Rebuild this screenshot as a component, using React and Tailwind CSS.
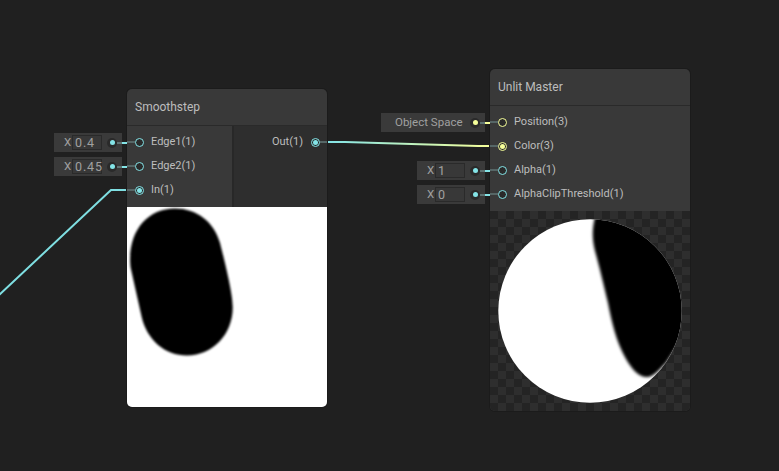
import React from "react";

const CYAN = "#84e4e7";
const YELLOW = "#f6ff9a";

function Port({ color, connected }) {
  return (
    <span
      className="relative ml-2 mr-[7px] flex h-[9px] w-[9px] shrink-0 items-center justify-center rounded-full border-[1.5px] bg-[#2a2a2a]"
      style={{ borderColor: color }}
    >
      {connected && <span className="h-[5px] w-[5px] rounded-full" style={{ background: color }} />}
    </span>
  );
}

function Field({ axis, value, color, text, className }) {
  return (
    <div className={`absolute right-[calc(100%+5px)] top-[3px] flex h-[19px] items-center bg-[#3a3a3a] text-[11.5px] text-[#a0a0a0] ${className}`}>
      {text ? (
        <span className="pl-[14px] pt-px">{text}</span>
      ) : (
        <>
          <span className="w-[18px] pl-2.5 pt-px">{axis}</span>
          <span className="flex h-[15px] w-[30px] items-center border border-[#2a2a2a] bg-[#383838] pl-[2px] pt-px text-[12.5px] tracking-[0.9px]">{value}</span>
        </>
      )}
      <span className="absolute right-[5px] flex h-2.5 w-2.5 items-center justify-center rounded-full bg-[#2a2a2a]">
        <span className="h-[5px] w-[5px] rounded-full" style={{ background: color }} />
      </span>
      {/* dashed link between the inline field and its port */}
      <span className="absolute left-full top-1/2 h-0.5 w-[5px] -translate-y-1/2" style={{ background: color }} />
      <span className="absolute right-0 top-1/2 h-0.5 w-[5px] -translate-y-1/2 bg-[#5f7373]" />
    </div>
  );
}

function InRow({ label, color, connected, field }) {
  return (
    <div className="relative flex h-6 items-center">
      <span className="absolute left-0 top-1/2 h-0.5 w-[8px] -translate-y-1/2 bg-[#566666]" />
      <Port color={color} connected={connected} />
      <span className="pt-px text-[11px] text-[#bdbdbd]">{label}</span>
      {field}
    </div>
  );
}

function SmoothstepPreview() {
  return (
    <div className="h-[200px] overflow-hidden rounded-b-[5px] bg-white">
      <svg width="200" height="200" viewBox="0 0 200 200">
        <defs>
          <filter id="soft" filterUnits="userSpaceOnUse" x="0" y="0" width="200" height="200">
            <feGaussianBlur stdDeviation="1.1" />
          </filter>
        </defs>
        <path
          d="M48 1.5 C70 1.5 87 15 93 36 C97 52 105.7 85 105.7 100 C106 127 86 148.5 60 148.5 C38 148.5 20 133 14.7 110 L3.5 60 C0 25 20 1.5 48 1.5 Z"
          fill="#000"
          filter="url(#soft)"
        />
      </svg>
    </div>
  );
}

function MasterPreview() {
  return (
    <div className="h-[200px] overflow-hidden rounded-b-[5px] bg-[repeating-conic-gradient(#2e2e2e_0_25%,#242424_0_50%)] bg-[length:16px_16px]">
      <svg width="200" height="200" viewBox="0 0 200 200">
        <defs>
          <clipPath id="disc">
            <circle cx="100" cy="100" r="91.7" />
          </clipPath>
          <filter id="soft2" filterUnits="userSpaceOnUse" x="0" y="0" width="200" height="200">
            <feGaussianBlur stdDeviation="1.6" />
          </filter>
        </defs>
        <circle cx="100" cy="100" r="91.7" fill="#fff" />
        <g clipPath="url(#disc)">
          <path
            d="M105 6 C102 18 102 28 105 40 C109 54 114 75 118 92 C122 112 126 130 136 148 C143 160 150 167 158 166 C164 165 168 160 176 152 L210 100 L200 0 Z"
            fill="#000"
            filter="url(#soft2)"
          />
        </g>
      </svg>
    </div>
  );
}

export default function App() {
  return (
    <div className="relative h-[471px] w-[779px] overflow-hidden bg-[#202020] font-['Roboto',sans-serif]">
      <svg className="absolute inset-0" width="779" height="471" viewBox="0 0 779 471" fill="none">
        <defs>
          <linearGradient id="wire" gradientUnits="userSpaceOnUse" x1="328" y1="0" x2="490" y2="0">
            <stop offset="0" stopColor={CYAN} />
            <stop offset="1" stopColor={YELLOW} />
          </linearGradient>
        </defs>
        <polyline points="127,190 111,190 -2,296" stroke="#7fdfe2" strokeWidth="2" />
        <polyline points="327,142 345,142 478,146 490,146" stroke="url(#wire)" strokeWidth="2" />
      </svg>

      {/* Smoothstep node */}
      <div className="absolute left-[127px] top-[89px] w-[200px] rounded-[5px] bg-[#393939] shadow-[0_0_0_1px_#1b1b1b]">
        <div className="flex h-[37px] items-center border-b border-[#2a2a2a] pl-2 text-xs text-[#bdbdbd]">Smoothstep</div>
        <div className="flex h-[81px]">
          <div className="w-[105px] pt-1">
            <InRow label="Edge1(1)" color={CYAN} field={<Field axis="X" value="0.4" color={CYAN} className="w-[68px]" />} />
            <InRow label="Edge2(1)" color={CYAN} field={<Field axis="X" value="0.45" color={CYAN} className="w-[68px]" />} />
            <InRow label="In(1)" color={CYAN} connected />
          </div>
          <div className="w-0.5 bg-[#282828]" />
          <div className="flex-1 bg-[#2e2e2e] pt-1">
            <div className="relative flex h-6 items-center justify-end">
              <span className="pt-px text-[11px] text-[#bdbdbd]">Out(1)</span>
              <Port color={CYAN} connected />
              <span className="absolute right-0 top-1/2 h-0.5 w-[7px] -translate-y-1/2 bg-[#566666]" />
            </div>
          </div>
        </div>
        <SmoothstepPreview />
      </div>

      {/* Unlit Master node */}
      <div className="absolute left-[490px] top-[69px] w-[200px] rounded-[5px] bg-[#393939] shadow-[0_0_0_1px_#1b1b1b]">
        <div className="flex h-[37px] items-center border-b border-[#2a2a2a] pl-2 text-xs text-[#bdbdbd]">Unlit Master</div>
        <div className="h-[105px] pt-1">
          <InRow label="Position(3)" color={YELLOW} field={<Field text="Object Space" color={YELLOW} className="w-[104px]" />} />
          <InRow label="Color(3)" color={YELLOW} connected />
          <InRow label="Alpha(1)" color={CYAN} field={<Field axis="X" value="1" color={CYAN} className="w-[68px]" />} />
          <InRow label="AlphaClipThreshold(1)" color={CYAN} field={<Field axis="X" value="0" color={CYAN} className="w-[68px]" />} />
        </div>
        <MasterPreview />
      </div>
    </div>
  );
}
